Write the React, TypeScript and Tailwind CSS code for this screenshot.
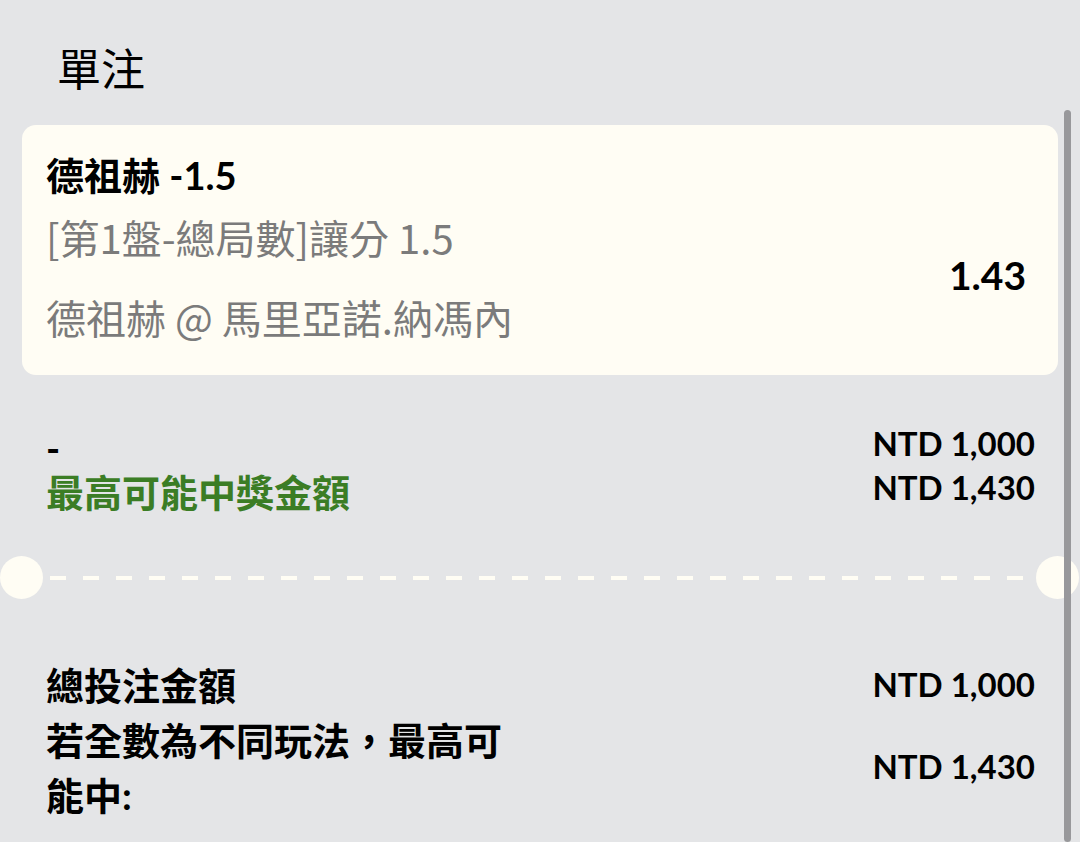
import React from 'react';

const latin = "font-['Lato','Noto_Sans_CJK_TC',sans-serif]";
const cjk = "font-['Noto_Sans_CJK_TC','Noto_Sans',sans-serif]";

const Divider: React.FC = () => (
    <div className="flex items-center h-[43px] mt-[42px]">
        <div className="w-[43px] h-[43px] rounded-full bg-[#fffdf4] shrink-0" />
        <div className="flex-1 mx-[7px] h-[4px] bg-[repeating-linear-gradient(90deg,#fffdf4_0_16px,transparent_16px_33px)]" />
        <div className="w-[43px] h-[43px] rounded-full bg-[#fffdf4] shrink-0 mr-[1px]" />
    </div>
);

export default function App() {
    return (
        <div className={`relative min-h-screen h-[842px] overflow-hidden bg-[#e4e5e7] text-black ${latin}`}>
            <div className={`pl-[57px] pt-[40px] text-[44px] leading-[54px] ${cjk}`}>單注</div>

            <div className="mx-[22px] mt-[31px] rounded-[14px] bg-[#fffdf4] pl-[24px] pr-[32px] pt-[25px] pb-[33px]">
                <div className="text-[38px] leading-[50px] font-bold">德祖赫 -1.5</div>
                <div className="flex items-center justify-between">
                    <div className={`text-[40px] leading-[50px] text-[#7b7b7b] ${cjk}`}>
                        <div className="mt-[12px]">[第1盤-總局數]讓分 1.5</div>
                        <div className="mt-[30px]">德祖赫 @ 馬里亞諾.納馮內</div>
                    </div>
                    <div className="mt-[8px] text-[39px] font-bold">1.43</div>
                </div>
            </div>

            <div className="mt-[51px] pl-[46px] pr-[45px]">
                <div className="flex h-[44px] items-center justify-between">
                    <span className="text-[38px] font-bold">-</span>
                    <span className="mb-[8px] text-[33px] font-bold">NTD 1,000</span>
                </div>
                <div className="flex h-[44px] items-center justify-between">
                    <span className="text-[38px] font-bold text-[#3b7d25]">最高可能中獎金額</span>
                    <span className="mb-[8px] text-[33px] font-bold">NTD 1,430</span>
                </div>
            </div>

            <Divider />

            <div className="mt-[59px] pl-[46px] pr-[45px]">
                <div className="flex h-[55px] items-center justify-between">
                    <span className="text-[38px] font-bold">總投注金額</span>
                    <span className="mb-[2px] text-[33px] font-bold">NTD 1,000</span>
                </div>
                <div className="flex items-center justify-between">
                    <span className="w-[470px] text-[38px] leading-[55px] font-bold">若全數為不同玩法，最高可能中:</span>
                    <span className="mb-[2px] text-[33px] font-bold">NTD 1,430</span>
                </div>
            </div>

            {/* scrollbar */}
            <div className="absolute right-[9px] top-[110px] bottom-0 w-[7px] rounded-full bg-[#98989b]" />
        </div>
    );
}
